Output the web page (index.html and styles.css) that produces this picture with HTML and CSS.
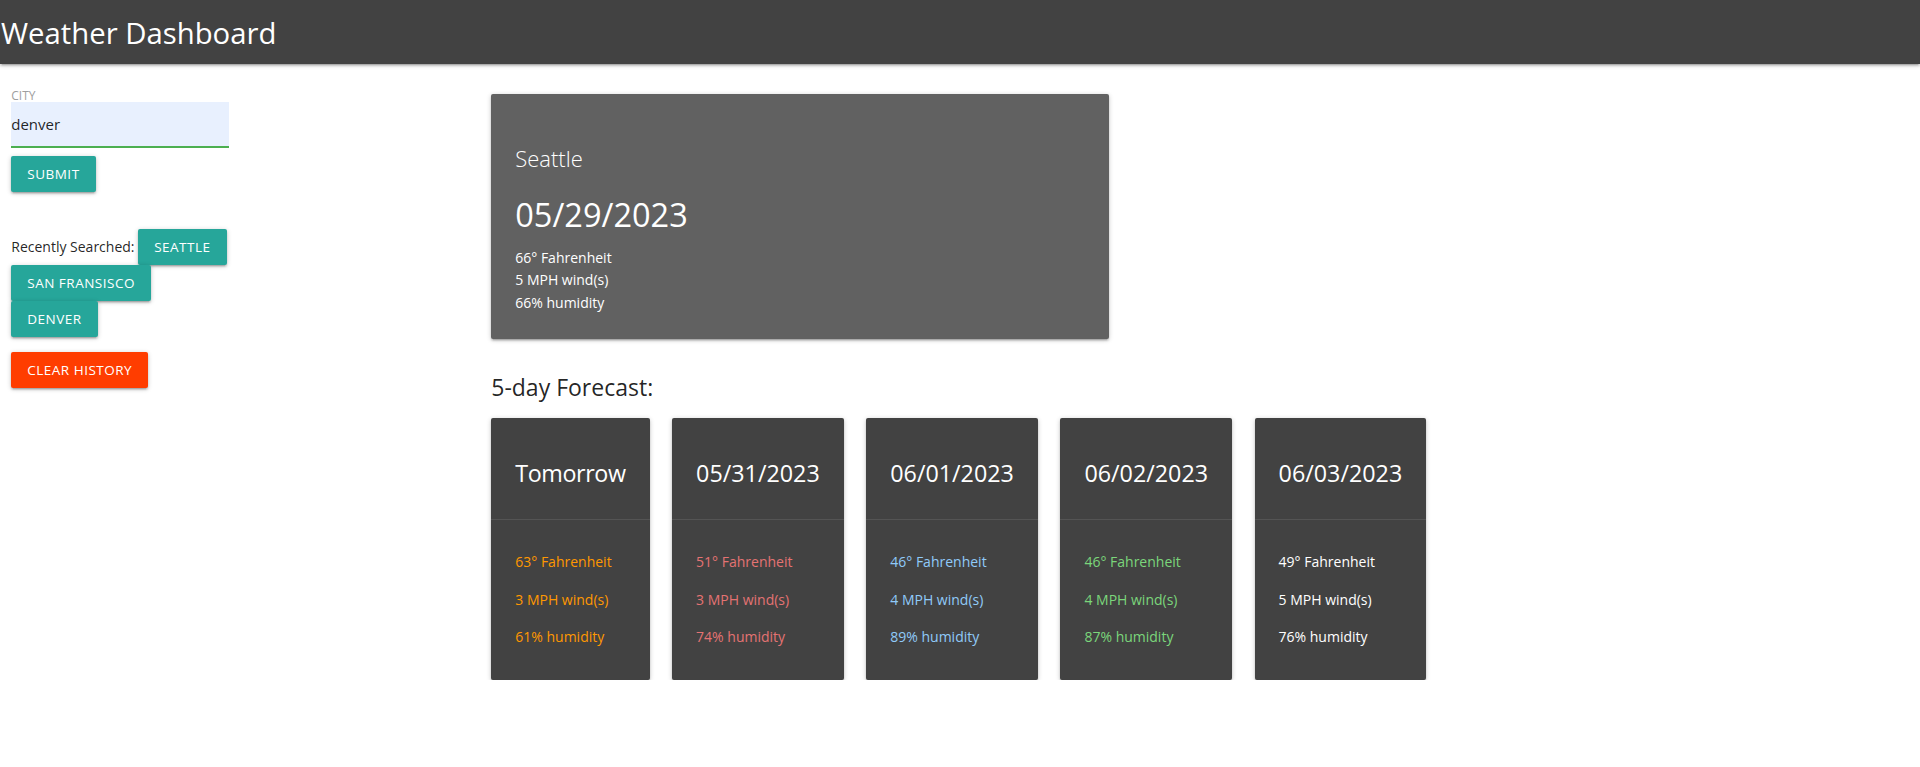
FILE: index.html
```html
<!DOCTYPE html>
<html lang="en">
<head>
<meta charset="utf-8">
<title>Weather Dashboard</title>
<link rel="stylesheet" href="styles.css">
</head>
<body>
<header class="topbar">
  <div class="brand">Weather Dashboard</div>
</header>
<main class="layout">
  <aside class="sidebar">
    <form class="search">
      <label class="field-label" for="city">City</label>
      <input id="city" class="city-input" type="text" value="denver">
      <button type="button" class="btn btn-teal submit">Submit</button>
    </form>
    <div class="history">Recently Searched: <button type="button" class="btn btn-teal">Seattle</button> <button type="button" class="btn btn-teal">San Fransisco</button> <button type="button" class="btn btn-teal">Denver</button></div>
    <button type="button" class="btn btn-clear">Clear History</button>
  </aside>
  <section class="content">
    <div class="current-card">
      <div class="current-city">Seattle</div>
      <div class="current-date">05/29/2023</div>
      <div class="current-stats">
        <div>66° Fahrenheit</div>
        <div>5 MPH wind(s)</div>
        <div>66% humidity</div>
      </div>
    </div>
    <h2 class="forecast-title">5-day Forecast:</h2>
    <div class="forecast-row">
      <div class="day-card">
        <div class="day-head"><div class="day-date day-word">Tomorrow</div></div>
        <div class="day-body t-orange">
          <p>63° Fahrenheit</p>
          <p>3 MPH wind(s)</p>
          <p>61% humidity</p>
        </div>
      </div>
      <div class="day-card">
        <div class="day-head"><div class="day-date">05/31/2023</div></div>
        <div class="day-body t-red">
          <p>51° Fahrenheit</p>
          <p>3 MPH wind(s)</p>
          <p>74% humidity</p>
        </div>
      </div>
      <div class="day-card">
        <div class="day-head"><div class="day-date">06/01/2023</div></div>
        <div class="day-body t-blue">
          <p>46° Fahrenheit</p>
          <p>4 MPH wind(s)</p>
          <p>89% humidity</p>
        </div>
      </div>
      <div class="day-card">
        <div class="day-head"><div class="day-date">06/02/2023</div></div>
        <div class="day-body t-green">
          <p>46° Fahrenheit</p>
          <p>4 MPH wind(s)</p>
          <p>87% humidity</p>
        </div>
      </div>
      <div class="day-card">
        <div class="day-head"><div class="day-date">06/03/2023</div></div>
        <div class="day-body t-white">
          <p>49° Fahrenheit</p>
          <p>5 MPH wind(s)</p>
          <p>76% humidity</p>
        </div>
      </div>
    </div>
  </section>
</main>
</body>
</html>
```

FILE: styles.css
```css
* {
  box-sizing: border-box;
}

html, body {
  margin: 0;
  padding: 0;
  background: #ffffff;
}

body {
  font-family: "Open Sans", "Noto Sans", "Liberation Sans", sans-serif;
  font-size: 14px;
  line-height: 22.5px;
  color: rgba(0, 0, 0, 0.87);
}

.topbar {
  position: relative;
  z-index: 2;
  height: 64px;
  background: #424242;
  box-shadow: 0 2px 2px 0 rgba(0, 0, 0, 0.14), 0 3px 1px -2px rgba(0, 0, 0, 0.12), 0 1px 5px 0 rgba(0, 0, 0, 0.2);
}

.brand {
  color: #ffffff;
  font-size: 29.3px;
  line-height: 67px;
  height: 64px;
  padding-left: 1px;
  white-space: nowrap;
}

.layout {
  display: flex;
  align-items: flex-start;
}

.sidebar {
  width: 480px;
  flex: 0 0 480px;
  padding-left: 11.25px;
  padding-top: 26px;
}

.search {
  width: 218px;
  margin: 0;
}

.field-label {
  display: block;
  font-size: 12px;
  line-height: 12px;
  height: 12px;
  color: #9e9e9e;
  text-transform: uppercase;
}

.city-input {
  display: block;
  width: 218px;
  height: 46px;
  margin: 0;
  padding: 0;
  border: none;
  border-bottom: 2px solid #4caf50;
  background: #e8f0fe;
  font-family: inherit;
  font-size: 15px;
  color: rgba(0, 0, 0, 0.87);
  outline: none;
}

.btn {
  display: inline-block;
  height: 36px;
  line-height: 36px;
  padding: 0 16px;
  border: none;
  border-radius: 2px;
  font-family: inherit;
  font-size: 13.5px;
  letter-spacing: 0.5px;
  text-transform: uppercase;
  color: #ffffff;
  white-space: nowrap;
  vertical-align: baseline;
  cursor: pointer;
  box-shadow: 0 2px 2px 0 rgba(0, 0, 0, 0.14), 0 3px 1px -2px rgba(0, 0, 0, 0.12), 0 1px 5px 0 rgba(0, 0, 0, 0.2);
}

.btn-teal {
  background: #26a69a;
}

.btn-clear {
  background: #ff3d00;
  display: block;
  width: fit-content;
  margin-top: 15px;
}

.submit {
  display: block;
  margin-top: 8px;
}

.history {
  width: 218px;
  margin-top: 37px;
}

.content {
  flex: 1;
  padding-left: 11.25px;
  padding-top: 30px;
}

.current-card {
  width: 618px;
  background: #616161;
  border-radius: 2px;
  padding: 24px 24px 25px;
  color: #ffffff;
  box-shadow: 0 2px 2px 0 rgba(0, 0, 0, 0.14), 0 3px 1px -2px rgba(0, 0, 0, 0.12), 0 1px 5px 0 rgba(0, 0, 0, 0.2);
}

.current-city {
  margin-top: 24px;
  font-size: 22px;
  font-weight: 300;
  line-height: 32px;
}

.current-date {
  margin-top: 23px;
  font-size: 32.5px;
  line-height: 35.75px;
}

.current-stats {
  margin-top: 14px;
  font-size: 14px;
  line-height: 22.5px;
}

.forecast-title {
  margin: 34px 0 17px;
  font-size: 23px;
  font-weight: 400;
  line-height: 28px;
  color: rgba(0, 0, 0, 0.87);
}

.forecast-row {
  display: flex;
  align-items: flex-start;
  gap: 22.5px;
}

.day-card {
  background: #424242;
  border-radius: 2px;
  box-shadow: 0 2px 2px 0 rgba(0, 0, 0, 0.14), 0 3px 1px -2px rgba(0, 0, 0, 0.12), 0 1px 5px 0 rgba(0, 0, 0, 0.2);
}

.day-head {
  padding: 24px;
}

.day-date {
  margin: 17.5px 0 8.5px;
  font-size: 23.3px;
  line-height: 27px;
  color: #ffffff;
  white-space: nowrap;
}

.day-word {
  letter-spacing: -0.4px;
}

.day-body {
  border-top: 1px solid rgba(160, 160, 160, 0.2);
  padding: 16px 24px;
  font-size: 14px;
  line-height: 22.5px;
}

.day-body p {
  margin: 15px 0;
  white-space: nowrap;
}

.t-orange { color: #ff9800; }
.t-red { color: #e57373; }
.t-blue { color: #90caf9; }
.t-green { color: #7bd67b; }
.t-white { color: #ffffff; }
```
